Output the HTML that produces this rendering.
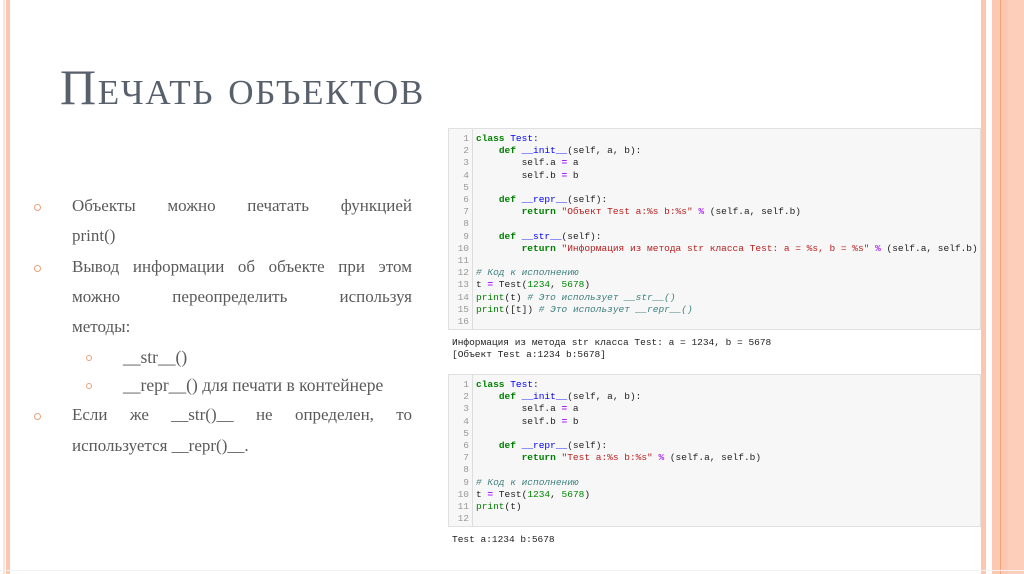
<!DOCTYPE html>
<html><head><meta charset="utf-8"><style>
*{margin:0;padding:0;box-sizing:border-box}
body{width:1024px;height:574px;overflow:hidden;background:#fff;position:relative;font-family:"Liberation Serif",serif}
.s{position:absolute;top:0;height:574px}
h1{position:absolute;left:60px;top:58px;font-weight:normal;font-size:50px;font-variant:small-caps;color:#58606c;letter-spacing:1.7px;white-space:nowrap}
.b{position:absolute;left:72px;width:340px;font-size:17px;color:#5a5a5a;line-height:30px;text-align:justify;text-align-last:justify}
.b.l{text-align-last:left}
.dot{position:absolute;width:7px;height:7px;border:1px solid #e8a27a;border-radius:50%}
.code{position:absolute;left:448px;width:533px;background:#f7f7f7;border:1px solid #e0e0e0;font-family:"Liberation Mono",monospace;font-size:9.5px}
.gut{position:absolute;left:0;top:0;bottom:0;width:24px;border-right:1px solid #ddd}
.ln{position:absolute;left:0;width:20px;text-align:right;color:#999;white-space:pre}
.cl{position:absolute;left:27px;white-space:pre;color:#222}
.k{color:#008000;font-weight:bold}.n{color:#0000ff}.f{color:#0000ff}.st{color:#ba2121}.o{color:#aa22ff;font-weight:bold}.c{color:#408080;font-style:italic}.m{color:#080}.e{color:#aa22ff}
.out{position:absolute;left:452px;font-family:"Liberation Mono",monospace;font-size:9.5px;color:#222;white-space:pre;line-height:12px}
</style></head><body>
<div class="s" style="left:3px;width:2px;background:#fbe3d8"></div>
<div class="s" style="left:6px;width:4px;background:#fcc6b0"></div>
<div class="s" style="left:981px;width:5px;background:#fcc6b0"></div>
<div class="s" style="left:992px;width:32px;background:#fdc8b2"></div>
<div class="s" style="left:1000px;width:1px;background:#f0a47e"></div>
<div class="s" style="left:1008px;width:16px;background:#fdcfbb"></div>
<div style="position:absolute;left:0;right:0;top:570px;height:1px;background:#f2f2f2"></div>

<h1>Печать объектов</h1>

<div class="dot" style="left:34px;top:204px"></div>
<div class="b" style="top:191px">Объекты можно печатать функцией</div>
<div class="b l" style="top:221px">print()</div>
<div class="dot" style="left:34px;top:265px"></div>
<div class="b" style="top:252px">Вывод информации об объекте при этом</div>
<div class="b" style="top:282px">можно переопределить используя</div>
<div class="b l" style="top:312px">методы:</div>
<div class="dot" style="left:86px;top:355px;width:6px;height:6px"></div>
<div class="b l" style="left:123px;top:342px;font-size:17.5px">__str__()</div>
<div class="dot" style="left:86px;top:383px;width:6px;height:6px"></div>
<div class="b l" style="left:123px;top:370px;font-size:17.5px;width:300px">__repr__() для печати в контейнере</div>
<div class="dot" style="left:34px;top:413px"></div>
<div class="b" style="top:400px">Если же __str()__ не определен, то</div>
<div class="b l" style="top:431px">используется __repr()__.</div>

<div class="code" style="top:128px;height:202px">
<div class="gut"></div>
<div class="ln" style="top:4px;line-height:12.2px">1
2
3
4
5
6
7
8
9
10
11
12
13
14
15
16</div>
<div class="cl" style="top:4px;line-height:12.2px"><span class="k">class</span> <span class="n">Test</span>:
    <span class="k">def</span> <span class="f">__init__</span>(self, a, b):
        self.a <span class="o">=</span> a
        self.b <span class="o">=</span> b

    <span class="k">def</span> <span class="f">__repr__</span>(self):
        <span class="k">return</span> <span class="st">"Объект Test a:%s b:%s"</span> <span class="o">%</span> (self.a, self.b)

    <span class="k">def</span> <span class="f">__str__</span>(self):
        <span class="k">return</span> <span class="st">"Информация из метода str класса Test: a = %s, b = %s"</span> <span class="o">%</span> (self.a, self.b)

<span class="c"># Код к исполнению</span>
t <span class="o">=</span> Test(<span class="m">1234</span>, <span class="m">5678</span>)
<span class="k" style="font-weight:normal">print</span>(t) <span class="c"># Это использует __str__()</span>
<span class="k" style="font-weight:normal">print</span>([t]) <span class="c"># Это использует __repr__()</span>
</div></div>
<div class="out" style="top:337px">Информация из метода str класса Test: a = 1234, b = 5678
[Объект Test a:1234 b:5678]</div>

<div class="code" style="top:374px;height:153px">
<div class="gut"></div>
<div class="ln" style="top:4px;line-height:12.2px">1
2
3
4
5
6
7
8
9
10
11
12</div>
<div class="cl" style="top:4px;line-height:12.2px"><span class="k">class</span> <span class="n">Test</span>:
    <span class="k">def</span> <span class="f">__init__</span>(self, a, b):
        self.a <span class="o">=</span> a
        self.b <span class="o">=</span> b

    <span class="k">def</span> <span class="f">__repr__</span>(self):
        <span class="k">return</span> <span class="st">"Test a:%s b:%s"</span> <span class="o">%</span> (self.a, self.b)

<span class="c"># Код к исполнению</span>
t <span class="o">=</span> Test(<span class="m">1234</span>, <span class="m">5678</span>)
<span class="k" style="font-weight:normal">print</span>(t)
</div></div>
<div class="out" style="top:534px">Test a:1234 b:5678</div>
</body></html>
